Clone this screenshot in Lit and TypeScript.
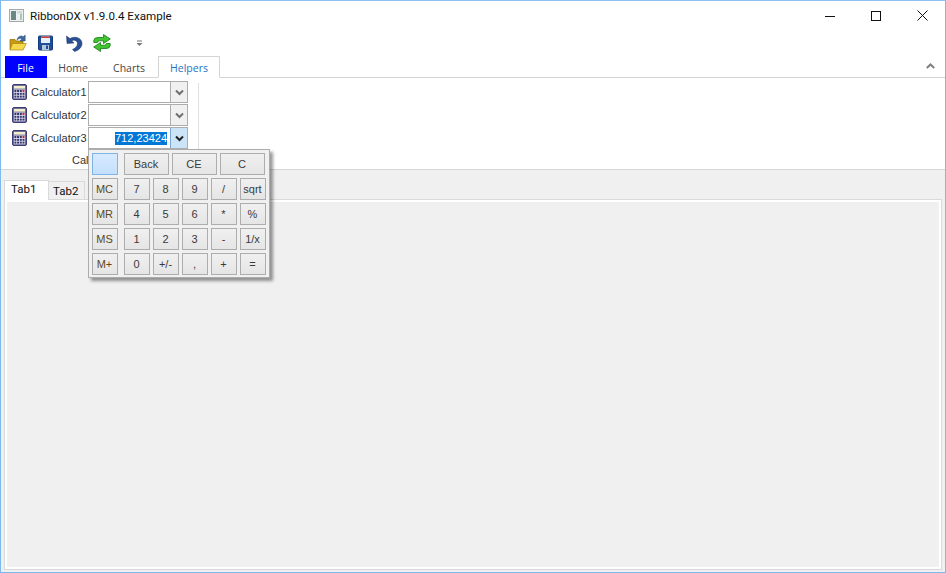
import { LitElement, html, css, svg } from "lit";
import { customElement } from "lit/decorators.js";

const calcIcon = html`<svg class="calc" width="16" height="16" viewBox="0 0 16 16">
  <rect x="0.5" y="0.5" width="14" height="15" rx="1.5" fill="#6f7199" stroke="#3c3c78"/>
  <rect x="2" y="2" width="11" height="2.6" fill="#f4eecb"/>
  <rect x="2" y="5.6" width="11" height="8.6" fill="#e8e8f4"/>
  ${[6, 8.8, 11.6].map((y) =>
    [2.4, 5.1, 7.8, 10.5].map((x, i) =>
      svg`<rect x="${x}" y="${y}" width="2" height="2" fill="${i === 3 && y === 6 ? "#c03030" : "#34346c"}"/>`
    )
  )}
</svg>`;

const chevron = html`<svg width="9" height="7" viewBox="0 0 9 7"><path d="M1 1.5 L4.5 5 L8 1.5" fill="none" stroke="currentColor" stroke-width="2"/></svg>`;

@customElement("app-root")
export class AppRoot extends LitElement {
  static styles = css`
    :host {
      display: block;
      position: relative;
      width: 946px;
      height: 573px;
      box-sizing: border-box;
      border: 1px solid #7db8ef;
      border-top-color: #8bc0f0;
      background: #fff;
      font-family: "Liberation Sans", Arial, sans-serif;
      font-size: 11px;
      color: #2a2a2a;
      overflow: hidden;
    }
    .root { display: flex; flex-direction: column; height: 100%; }
    .title { display: flex; align-items: center; height: 29px; flex: none; }
    .app-icon { margin-left: 8px; margin-right: 5px; }
    .title-text { font-family: Roboto, sans-serif; font-size: 11.6px; color: #111; flex: 1; white-space: nowrap; }
    .wctl { display: flex; align-items: center; }
    .wbtn { width: 46px; height: 29px; display: flex; align-items: center; justify-content: center; }
    .qat { display: flex; align-items: center; height: 25px; flex: none; padding-left: 8px; }
    .qi { width: 18px; height: 18px; margin-right: 10px; }
    .qat-more { margin-left: 15px; margin-top: 1px; }
    .tabs { display: flex; align-items: flex-end; height: 23px; box-sizing: border-box; flex: none; border-bottom: 1px solid #d4d4d4; padding-left: 4px; }
    .tab { height: 22px; padding-top: 3px; display: flex; align-items: center; justify-content: center; box-sizing: border-box; color: #444; font-family: "Open Sans", sans-serif; font-size: 10.5px; }
    .tab.file { width: 42px; padding: 1px 1px 0 0; background: #0000ff; color: #fff; margin-right: 12px; margin-bottom: -1px; }
    .tab.home { width: 28px; margin-right: 26px; }
    .tab.charts { width: 32px; margin-right: 13px; }
    .tab.helpers { width: 62px; padding-top: 1px; border: 1px solid #d4d4d4; border-bottom: 1px solid #fff; margin-bottom: -1px; color: #1f74c4; }
    .collapse { margin-left: auto; margin-right: 10px; align-self: center; color: #808080; line-height: 0; }
    .ribbon { height: 92px; flex: none; box-sizing: border-box; padding: 3px 0 0 11px; display: flex; border-bottom: 1px solid #d6d6d6; }
    .group { display: flex; flex-direction: column; gap: 1px; width: 186px; }
    .row { display: flex; align-items: center; height: 22px; }
    .calc { flex: none; margin-right: 3px; }
    .lbl { width: 57px; white-space: nowrap; flex: none; color: #333; }
    .combo { width: 100px; height: 22px; box-sizing: border-box; border: 1px solid #adadad; display: flex; background: #fff; }
    .val { flex: 1; display: flex; justify-content: flex-end; align-items: center; padding-right: 3px; }
    .val span { background: #0078d7; color: #fff; line-height: 13px; }
    .drop { width: 16px; border-left: 1px solid #adadad; background: #f0f0f0; color: #707070; display: flex; align-items: center; justify-content: center; }
    .drop.on { background: #cce4f7; color: #222; border-left-color: #7aa9d6; }
    .row4 { padding-left: 60px; color: #333; }
    .sep { width: 1px; height: 82px; background: #e0e0e0; margin-top: 2px; }
    .body { flex: 1; background: #f0f0f0; padding: 10px 3px 2px 3px; display: flex; flex-direction: column; min-height: 0; }
    .ptabs { display: flex; align-items: flex-end; height: 20px; flex: none; position: relative; z-index: 1; margin-bottom: -1px; }
    .ptab { box-sizing: border-box; display: flex; align-items: center; font-family: Roboto, sans-serif; font-size: 11.5px; color: #111; }
    .ptab.on { width: 45px; height: 20px; padding: 0 0 3px 6px; background: #fff; border: 1px solid #d9d9d9; border-bottom: 0; }
    .ptab.off { width: 36px; height: 18px; padding-left: 4px; background: #f0f0f0; border-right: 1px solid #d9d9d9; border-top: 1px solid #d9d9d9; margin-bottom: 1px; }
    .page { flex: 1; background: #f0f0f0; border: 1px solid #d9d9d9; box-shadow: inset 0 0 0 2px #fff; }
    .popup {
      position: absolute; left: 87px; top: 148px; width: 182px; height: 129px; box-sizing: border-box;
      background: #f0f0f0; border: 1px solid #acacac; box-shadow: 3px 3px 3px rgba(0,0,0,.4);
      padding: 3px 3px 0 3px; display: flex; flex-direction: column; gap: 3px;
    }
    .prow { display: flex; gap: 3px; }
    .cbtn {
      width: 26px; height: 22px; box-sizing: border-box; border: 1px solid #adadad; padding-right: 1px;
      background: linear-gradient(#f0f0f0, #e5e5e5); display: flex; align-items: center; justify-content: center;
      font-size: 11px; color: #3a3a3a; flex: none;
    }
    .cbtn.wide { width: 45px; }
    .cbtn.first { margin-right: 3px; }
    .cbtn.mem { color: #5a4a20; }
    .cbtn.disp { background: linear-gradient(#d8eaff, #c4e0fc); border-color: #7db4ea; }
  `;

  render() {
    const rows = [
      ["MC", "7", "8", "9", "/", "sqrt"],
      ["MR", "4", "5", "6", "*", "%"],
      ["MS", "1", "2", "3", "-", "1/x"],
      ["M+", "0", "+/-", ",", "+", "="],
    ];
    return html`
      <div class="root">
        <div class="title">
          <svg class="app-icon" width="16" height="16" viewBox="0 0 16 16">
            <rect x="0.5" y="1.5" width="14" height="12" fill="#eef1f1" stroke="#a4a9a9"/>
            <rect x="2" y="3" width="5" height="9" fill="#6d8785"/>
            <rect x="8" y="3" width="5" height="2.5" fill="#d0dbd8"/>
            <rect x="11" y="5.5" width="2" height="6.5" fill="#a9c8b8"/>
          </svg>
          <div class="title-text">RibbonDX v1.9.0.4 Example</div>
          <div class="wctl">
            <div class="wbtn"><svg width="10" height="10" viewBox="0 0 10 10"><path d="M0 5.5H10" stroke="#111"/></svg></div>
            <div class="wbtn"><svg width="10" height="10" viewBox="0 0 10 10"><rect x="0.5" y="0.5" width="9" height="9" fill="none" stroke="#111"/></svg></div>
            <div class="wbtn"><svg width="11" height="11" viewBox="0 0 11 11"><path d="M0.5 0.5L10.5 10.5M10.5 0.5L0.5 10.5" stroke="#111"/></svg></div>
          </div>
        </div>
        <div class="qat">
          <svg class="qi" viewBox="0 0 18 18">
            <path d="M1 5.5 H6 L7.5 7 H14 V15.5 H1 Z" fill="#c79a10" stroke="#8d6d08" stroke-width=".7"/>
            <path d="M3.5 9.5 H17.3 L14 16 H1 Z" fill="#f6d84e" stroke="#a88410" stroke-width=".7"/>
            <path d="M8 6 C8.5 2.5 12 1 14.5 2.6 L16.2 1 V7 H11 L12.8 5 C11 4.2 9.5 4.5 8 6 Z" fill="#3d6a9e" stroke="#2a4c78" stroke-width=".5"/>
          </svg>
          <svg class="qi" viewBox="0 0 18 18">
            <rect x="1.5" y="2" width="14" height="14" rx="1" fill="#1c4f9c" stroke="#143a78"/>
            <rect x="4" y="2.5" width="9" height="6.5" fill="#e8f0fb"/>
            <rect x="4" y="2.5" width="9" height="1.5" fill="#d04030"/>
            <rect x="5" y="11" width="7" height="5" fill="#b8c8dc"/>
            <rect x="9" y="11.5" width="2" height="3.5" fill="#1c4f9c"/>
          </svg>
          <svg class="qi" viewBox="0 0 18 18">
            <path d="M1.5 2 L2 9.5 L9 9 L6.7 6.8 C9 5.3 12.5 6.5 12.5 9.5 C12.5 12 10.5 14 7.5 15.5 L9.5 17.5 C14 16.5 17 13 17 9.5 C17 4 10 1.5 5 4.6 Z" fill="#2b4f93" stroke="#1b3470" stroke-width=".5"/>
          </svg>
          <svg class="qi" viewBox="0 0 18 18">
            <path d="M0.8 8.5 V6.5 Q1 3.5 5 3.5 H10.5 V0.5 L17.3 5 L10.5 9.5 V6.8 H6.5 Q4.8 6.8 4.6 8.5 Z" fill="#42c431" stroke="#157a14" stroke-width=".8"/>
            <path d="M17.2 9.5 V11.5 Q17 14.5 13 14.5 H7.5 V17.5 L0.7 13 L7.5 8.5 V11.2 H11.5 Q13.2 11.2 13.4 9.5 Z" fill="#42c431" stroke="#157a14" stroke-width=".8"/>
          </svg>
          <svg class="qat-more" width="7" height="7" viewBox="0 0 7 7"><path d="M1 1H6" stroke="#777"/><path d="M0.5 3H6.5L3.5 6Z" fill="#777"/></svg>
        </div>
        <div class="tabs">
          <div class="tab file">File</div>
          <div class="tab home">Home</div>
          <div class="tab charts">Charts</div>
          <div class="tab helpers">Helpers</div>
          <div class="collapse"><svg width="9" height="6" viewBox="0 0 9 6"><path d="M0.8 5L4.5 1.5L8.2 5" fill="none" stroke="currentColor" stroke-width="2"/></svg></div>
        </div>
        <div class="ribbon">
          <div class="group">
            ${["Calculator1", "Calculator2", "Calculator3"].map(
              (n, i) => html`<div class="row">
                ${calcIcon}
                <div class="lbl">${n}</div>
                <div class="combo">
                  <div class="val">${i === 2 ? html`<span>712,23424</span>` : ""}</div>
                  <div class="drop ${i === 2 ? "on" : ""}">${chevron}</div>
                </div>
              </div>`
            )}
            <div class="row row4">Calculator4</div>
          </div>
          <div class="sep"></div>
        </div>
        <div class="body">
          <div class="ptabs">
            <div class="ptab on">Tab1</div>
            <div class="ptab off">Tab2</div>
          </div>
          <div class="page"></div>
        </div>
      </div>
      <div class="popup">
        <div class="prow">
          <div class="cbtn disp first"></div>
          <div class="cbtn wide">Back</div>
          <div class="cbtn wide">CE</div>
          <div class="cbtn wide">C</div>
        </div>
        ${rows.map(
          (r) => html`<div class="prow">
            ${r.map((t, i) => html`<div class="cbtn ${i === 0 ? "first mem" : ""}">${t}</div>`)}
          </div>`
        )}
      </div>
    `;
  }
}
